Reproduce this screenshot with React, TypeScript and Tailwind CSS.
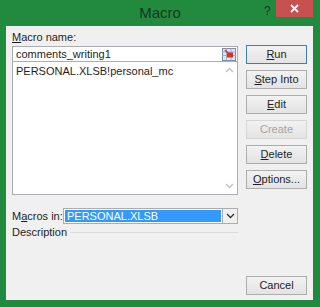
import type { ReactNode } from 'react';

const font = { fontFamily: '"Liberation Sans", Arial, sans-serif' };

function Btn({ children, primary, disabled }: { children: ReactNode; primary?: boolean; disabled?: boolean }) {
  return (
    <div
      className={`h-[19px] w-[61px] flex items-center justify-center text-[11px] leading-none border bg-gradient-to-b from-[#f2f2f2] to-[#e3e3e3] ${
        primary ? 'border-[#3c7fb1]' : disabled ? 'border-[#d5d5d5] text-[#a3a3a3]' : 'border-[#adadad] text-[#1e1e1e]'
      }`}
    >
      {children}
    </div>
  );
}

function U({ children }: { children: ReactNode }) {
  return <span className="underline underline-offset-[1px]">{children}</span>;
}

function Chevron({ up }: { up?: boolean }) {
  return (
    <svg width="9" height="6" viewBox="0 0 9 6">
      <path d={up ? 'M1 5 L4.5 1.5 L8 5' : 'M1 1 L4.5 4.5 L8 1'} fill="none" stroke="currentColor" strokeWidth="1.3" />
    </svg>
  );
}

function RefIcon() {
  return (
    <svg width="14" height="13" viewBox="0 0 14 13">
      <rect x="0.5" y="0.5" width="13" height="12" fill="#dce6f4" stroke="#7a8fb0" />
      <path d="M0.5 4 H13.5 M0.5 7.5 H13.5 M4.5 0.5 V12.5 M9 0.5 V12.5" stroke="#9fb0cc" />
      <rect x="5" y="4.5" width="6" height="5" fill="#d9302c" />
      <path d="M3 2 L6 5" stroke="#d9302c" strokeWidth="1.5" />
    </svg>
  );
}

export default function App() {
  return (
    <div className="w-[320px] h-[307px] bg-[#218a3f] flex flex-col overflow-hidden" style={font}>
      <div className="h-[26px] relative flex items-center justify-center">
        <span className="text-[15px] text-[#17381f] mt-[1px]">Macro</span>
        <span className="absolute left-[264px] top-[2px] text-[12px] text-[#17381f]">?</span>
        <div className="absolute left-[276px] top-0 w-[37px] h-[17px] bg-[#c75050] flex items-center justify-center">
          <svg width="9" height="9" viewBox="0 0 9 9">
            <path d="M1 1 L8 8 M8 1 L1 8" stroke="#fff" strokeWidth="1.8" />
          </svg>
        </div>
      </div>
      <div className="ml-[6px] mr-[7px] h-[274px] bg-[#f0f0f0] flex text-[11px] text-[#1e1e1e]">
        <div className="w-[232px] pl-[6px] flex flex-col">
          <div className="mt-[3px] h-[17px] leading-[17px]">
            <U>M</U>acro name:
          </div>
          <div className="h-[16px] border border-[#abadb3] bg-white flex items-center pl-[3px] pr-[1px]">
            <span className="flex-1 leading-none">comments_writing1</span>
            <RefIcon />
          </div>
          <div className="h-[133px] border border-t-0 border-[#abadb3] bg-white flex">
            <div className="flex-1 pl-[3px] pt-[2px] leading-[15px]">PERSONAL.XLSB!personal_mc</div>
            <div className="w-[15px] flex flex-col items-center justify-between py-[5px] text-[#c2c2c2]">
              <Chevron up />
              <Chevron />
            </div>
          </div>
          <div className="mt-[13px] h-[16px] flex items-center">
            <span className="w-[51px] shrink-0 whitespace-nowrap">
              M<U>a</U>cros in:
            </span>
            <div className="flex-1 h-[16px] border border-[#abadb3] bg-white flex">
              <div className="flex-1 m-[1px] bg-[#3399ff] text-white leading-[12px] pl-[2px]">PERSONAL.XLSB</div>
              <div className="w-[15px] border-l border-[#abadb3] bg-[#f0f0f0] flex items-center justify-center text-[#333]">
                <Chevron />
              </div>
            </div>
          </div>
          <div className="mt-[1px] h-[14px] flex items-center">
            <span>Description</span>
            <div className="flex-1 ml-[3px] h-px bg-[#dcdcdc]" />
          </div>
        </div>
        <div className="ml-[8px] flex flex-col">
          <div className="mt-[19px] flex flex-col gap-[6px]">
            <Btn primary>
              <U>R</U>un
            </Btn>
            <Btn>
              <U>S</U>tep Into
            </Btn>
            <Btn>
              <U>E</U>dit
            </Btn>
            <Btn disabled>Create</Btn>
            <Btn>
              <U>D</U>elete
            </Btn>
            <Btn>
              <U>O</U>ptions...
            </Btn>
          </div>
          <div className="mt-[87px]">
            <Btn>Cancel</Btn>
          </div>
        </div>
      </div>
    </div>
  );
}
